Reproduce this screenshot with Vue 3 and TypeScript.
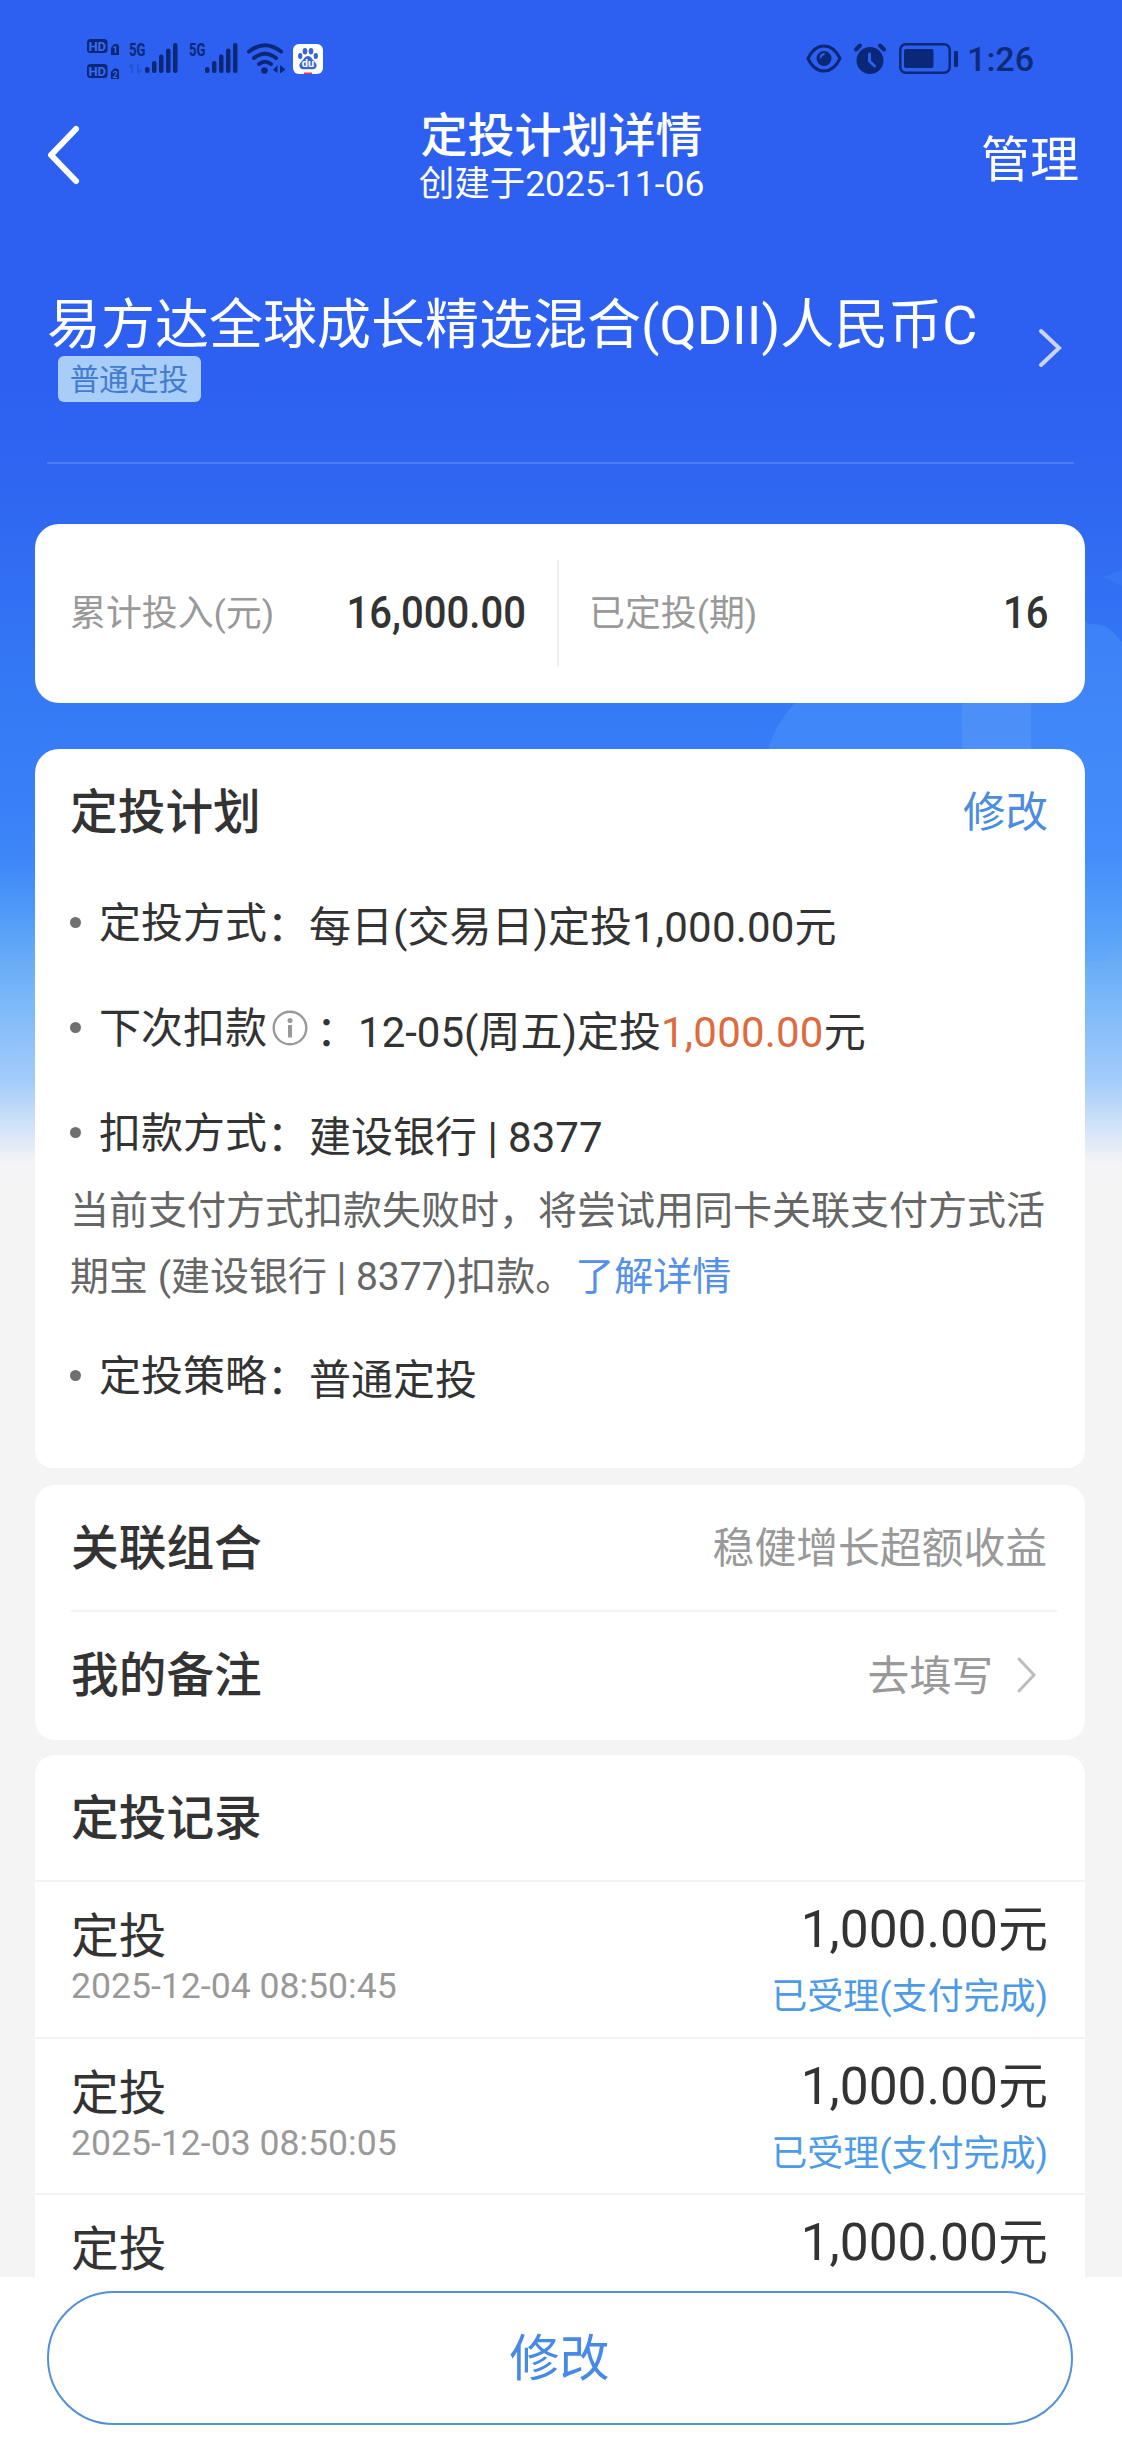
<script setup lang="ts">
interface RecordItem {
  time: string
  amount: string
  status: string
}

const records: RecordItem[] = [
  { time: '2025-12-04 08:50:45', amount: '1,000.00', status: '已受理(支付完成)' },
  { time: '2025-12-03 08:50:05', amount: '1,000.00', status: '已受理(支付完成)' },
  { time: '', amount: '1,000.00', status: '' },
]

const bars = [
  { x: 0, y: 24, h: 6 },
  { x: 7, y: 18, h: 12 },
  { x: 14, y: 11.5, h: 18.5 },
  { x: 21, y: 5.5, h: 24.5 },
  { x: 28, y: 0, h: 30 },
]
</script>

<template>
  <div class="page">
    <svg class="decor" width="400" height="400" viewBox="0 0 400 400">
      <path d="M46 169Q54 143 73 123Q120 60 200 45L363 40L366 44Q384 43 392 53L400 62V342Q396 362 383 380L363 382H46Z" fill="#5aa2ff" fill-opacity=".3" />
      <path d="M245 60H309V169H240V123Z" fill="#fff" fill-opacity=".07" />
      <path d="M381 -3L400 -10V6Z" fill="#5aa2ff" fill-opacity=".15" />
    </svg>

    <div class="statusbar">
      <svg class="hd" width="32" height="42" viewBox="0 0 32 42">
        <rect x="0" y="1" width="20.5" height="14" rx="3.5" />
        <text x="10.2" y="12.6" class="cut">HD</text>
        <path d="M24 10l3-4h2q3 0 3 3v8h-8z" />
        <text x="28" y="15.4" class="num">1</text>
        <rect x="0" y="26" width="20.5" height="14" rx="3.5" />
        <text x="10.2" y="37.6" class="cut">HD</text>
        <path d="M24 34l3-3.500h2q3 0 3 3v7.500h-8z" />
        <text x="28" y="39.800" class="num">2</text>
      </svg>
      <svg class="sig first" width="49" height="30" viewBox="0 0 49 30">
        <text x="0" y="13.300" textLength="16.500" lengthAdjust="spacingAndGlyphs" class="g5">5G</text>
        <path d="M3 21v9M0 24l3-3M9 21v9M12 27l-3 3" stroke="#0f2f86" stroke-width="2" fill="none" opacity=".25" />
        <rect v-for="b in bars" :key="b.x" :x="b.x + 16" :y="b.y" width="4.500" :height="b.h" rx="2" />
      </svg>
      <svg class="sig" width="49" height="30" viewBox="0 0 49 30">
        <text x="0" y="13.300" textLength="16.500" lengthAdjust="spacingAndGlyphs" class="g5">5G</text>
        <rect v-for="b in bars" :key="b.x" :x="b.x + 16" :y="b.y" width="4.500" :height="b.h" rx="2" />
      </svg>
      <svg class="wifi" width="39" height="31" viewBox="0 0 39 31">
        <g fill="none" stroke="#0b2878" stroke-width="4" stroke-linecap="round">
          <path d="M2 8.500Q18 -4 34 8.500" />
          <path d="M7 15Q18 6.500 29 15" />
          <path d="M12 21Q18 16.500 24 21" />
        </g>
        <circle cx="17.500" cy="27.500" r="3.300" />
        <path d="M26 27l4.500-5v8zM33 22l5.500 4.500-5.500 4z" />
      </svg>
      <svg class="baidu" width="30" height="30" viewBox="0 0 30 30">
        <rect width="30" height="30" rx="6" fill="#fff" />
        <g fill="#3b63d8">
          <ellipse cx="7.200" cy="12" rx="2.200" ry="3" />
          <ellipse cx="12" cy="7.200" rx="2.300" ry="3.200" />
          <ellipse cx="18" cy="7.200" rx="2.300" ry="3.200" />
          <ellipse cx="22.800" cy="12" rx="2.200" ry="3" />
          <path d="M15 12c3 0 4 3 6 5s3 3.500 2.500 5.500-2.500 2.800-4.500 2.800h-8c-2 0-4-.8-4.500-2.800S7 19 9 17s3-5 6-5z" />
        </g>
        <text x="15" y="23" class="du">du</text>
        <path d="M11 28.500h8v1.500h-8z" fill="#e0393e" />
      </svg>
      <div class="right">
        <svg class="eye" width="36" height="29" viewBox="0 0 36 29">
          <path d="M2 14.500C6 6 11 2 18 2s12 4 16 12.500C30 23 25 27 18 27S6 23 2 14.500z" fill="none" stroke="#0b2878" stroke-width="3" />
          <circle cx="18" cy="14.500" r="7.500" />
          <path d="M14.500 13.500q.5-3 3.500-3.500" fill="none" stroke="#2d60f0" stroke-width="1.800" stroke-linecap="round" />
        </svg>
        <svg class="alarm" width="32" height="31" viewBox="0 0 32 31">
          <circle cx="16" cy="17.500" r="13.500" />
          <path d="M2 6.500L6 2.500M30 6.500L26 2.500" stroke="#0b2878" stroke-width="4" stroke-linecap="round" />
          <path d="M15.500 11v7l5 5" fill="none" stroke="#2d60f0" stroke-width="3" stroke-linecap="round" />
        </svg>
        <svg class="battery" width="60" height="31" viewBox="0 0 60 31">
          <rect x="1.300" y="1.300" width="49.400" height="28.400" rx="5.500" fill="none" stroke="#0b2878" stroke-width="2.500" />
          <rect x="5" y="6" width="29.500" height="19" rx="2" />
          <rect x="55" y="8" width="4" height="16" rx="1" />
        </svg>
        <span class="clock">1:26</span>
      </div>
    </div>

    <header class="nav">
      <svg class="back" width="33" height="60" viewBox="0 0 33 60">
        <path d="M29 4L4 30l25 26" fill="none" stroke="#fff" stroke-width="6" stroke-linecap="round" stroke-linejoin="round" />
      </svg>
      <div class="titles">
        <h1>定投计划详情</h1>
        <p>创建于2025-11-06</p>
      </div>
      <span class="manage">管理</span>
    </header>

    <section class="fund">
      <div class="fund-main">
        <div class="fund-name">易方达全球成长精选混合(QDII)人民币C</div>
        <span class="tag">普通定投</span>
      </div>
      <svg class="arrow" width="24" height="40" viewBox="0 0 24 40">
        <path d="M3 3l18 17L3 37" fill="none" stroke="#cdd4ee" stroke-width="4" stroke-linecap="round" />
      </svg>
    </section>

    <section class="card summary">
      <div class="cell left">
        <span class="label">累计投入(元)</span>
        <span class="din">16,000.00</span>
      </div>
      <div class="cell">
        <span class="label">已定投(期)</span>
        <span class="din">16</span>
      </div>
    </section>

    <section class="card plan">
      <div class="plan-head">
        <h2>定投计划</h2>
        <a>修改</a>
      </div>
      <div class="row"><i></i><span>定投方式</span><span class="colon">：</span><b>每日(交易日)定投<em>1,000.00</em>元</b></div>
      <div class="row">
        <i></i><span>下次扣款</span>
        <svg class="info" width="36" height="36" viewBox="0 0 36 36">
          <circle cx="18" cy="18" r="16.300" fill="none" stroke="#999" stroke-width="2.400" />
          <circle cx="18" cy="10.500" r="2.500" fill="#999" />
          <rect x="16" y="15" width="4" height="12.500" fill="#999" />
        </svg>
        <span class="colon">：</span><b>12-05(周五)定投<em class="hot">1,000.00</em>元</b>
      </div>
      <div class="row"><i></i><span>扣款方式</span><span class="colon">：</span><b>建设银行 | 8377</b></div>
      <p class="note">当前支付方式扣款失败时，将尝试用同卡关联支付方式活<br>期宝 (建设银行 | 8377)扣款。<a>了解详情</a></p>
      <div class="row last"><i></i><span>定投策略</span><span class="colon">：</span><b>普通定投</b></div>
    </section>

    <section class="card links">
      <div class="link-row">
        <h2>关联组合</h2>
        <span>稳健增长超额收益</span>
      </div>
      <div class="link-row second">
        <h2>我的备注</h2>
        <span>去填写</span>
        <svg width="21" height="36" viewBox="0 0 21 36">
          <path d="M3 2l15 16L3 34" fill="none" stroke="#bdbdbd" stroke-width="3" stroke-linecap="round" />
        </svg>
      </div>
    </section>

    <section class="card records">
      <div class="rec-head"><h2>定投记录</h2></div>
      <div v-for="(r, i) in records" :key="i" class="rec">
        <div>
          <div class="rec-name">定投</div>
          <div class="rec-time">{{ r.time }}</div>
        </div>
        <div class="rec-right">
          <div class="rec-amount">{{ r.amount }}<small>元</small></div>
          <div class="rec-status">{{ r.status }}</div>
        </div>
      </div>
    </section>

    <footer class="footer">
      <button type="button"><span>修改</span></button>
    </footer>
  </div>
</template>

<style>
body {
  background: #f4f4f5;
}
</style>

<style scoped>
* {
  box-sizing: border-box;
}
.page {
  position: relative;
  display: flex;
  flex-direction: column;
  width: 1122px;
  height: 2442px;
  overflow: hidden;
  font-family: Roboto, "Noto Sans CJK SC", sans-serif;
  color: #333;
  background: linear-gradient(180deg, #2d60f0 0, #2d60f0 380px, #2f67f1 500px, #357af5 700px, #397ff8 800px, #3d87f8 860px, #4a96f8 900px, #62a8f7 950px, #7db9f8 1005px, #a2cbfa 1080px, #cbe0f9 1120px, #f4f3f5 1163px, #f4f4f5 1200px);
}
.decor {
  position: absolute;
  left: 722px;
  top: 580px;
}
svg {
  overflow: visible;
}
.page > *:not(.decor) {
  position: relative;
}
h1,
h2,
p {
  margin: 0;
  font-weight: 500;
}
.statusbar {
  display: flex;
  align-items: flex-start;
  height: 104px;
  padding: 43px 88px 0 87px;
  fill: #0b2878;
  flex: none;
}
.hd {
  margin-top: -5px;
}
.cut,
.num,
.du {
  font: 700 13px Roboto, sans-serif;
  text-anchor: middle;
  fill: #3c6cf0;
}
.num {
  font-size: 9px;
}
.du {
  font-size: 11px;
  fill: #fff;
}
.g5 {
  font: 700 17.5px Roboto, sans-serif;
}
.sig {
  margin-left: 11px;
}
.sig.first {
  margin-left: 10px;
}
.wifi {
  margin-left: 9px;
}
.baidu {
  margin: 1px 0 0 7px;
}
.right {
  display: flex;
  margin-left: auto;
}
.eye {
  margin-top: 1px;
}
.alarm {
  margin-left: 12px;
}
.battery {
  margin-left: 13px;
}
.clock {
  margin-left: 8px;
  margin-top: -4px;
  font-size: 34px;
  font-weight: 500;
  line-height: 40px;
  color: #0f2a78;
}
.nav {
  display: flex;
  justify-content: space-between;
  height: 156px;
  padding: 0 43px 0 47px;
  color: #fff;
  flex: none;
}
.back {
  margin-top: 21px;
}
.titles {
  text-align: center;
  margin-left: 62px;
}
.titles h1 {
  font-size: 47px;
  line-height: 60px;
  padding-top: 2px;
}
.titles p {
  font-size: 35.5px;
  line-height: 40px;
  margin-top: -2px;
  font-weight: 400;
}
.manage {
  font-size: 49px;
  line-height: 60px;
  margin-top: 27px;
}
.fund {
  display: flex;
  justify-content: space-between;
  height: 204px;
  margin: 0 48px 60px 47px;
  padding-top: 35px;
  border-bottom: 2px solid #4a7df3;
  flex: none;
}
.fund-name {
  font-size: 54px;
  line-height: 62px;
  color: #fff;
  white-space: nowrap;
}
.tag {
  display: block;
  width: 143px;
  height: 46px;
  margin: -1px 0 0 11px;
  padding-right: 1px;
  border-radius: 6px;
  background: #a9cdf9;
  color: #427bcf;
  font-size: 29.7px;
  line-height: 47px;
  text-align: center;
}
.arrow {
  margin: 33px 12px 0 0;
}
.card {
  background: #fff;
  margin: 0 37px 0 35px;
  border-radius: 20px;
  flex: none;
}
.summary {
  display: flex;
  height: 179px;
  border-radius: 24px;
  padding: 36px 0;
}
.cell {
  display: flex;
  flex: 1;
  align-items: center;
  justify-content: space-between;
  padding: 0 37px 0 30px;
}
.cell.left {
  flex: 0 0 524px;
  padding: 0 31px 0 35px;
  border-right: 2px solid #f0f0f0;
}
.label {
  font-size: 35.9px;
  color: #999;
  margin-top: -8px;
}
.din {
  font-size: 43.5px;
  font-weight: 500;
  transform: scaleX(0.92);
  transform-origin: right;
}
.plan {
  height: 719px;
  margin-top: 46px;
  border-radius: 24px 24px 18px 18px;
  padding: 26px 0 0 36px;
}
.plan-head {
  display: flex;
  justify-content: space-between;
  align-items: center;
  height: 76px;
  padding-right: 37px;
  margin-bottom: 20px;
}
h2 {
  font-size: 47.7px;
  line-height: 60px;
}
.plan h2 {
  margin-left: -1px;
}
.plan-head a {
  font-size: 42.5px;
  line-height: 60px;
  margin-top: -1px;
  color: #4a8ce0;
}
.row {
  display: flex;
  align-items: center;
  height: 105px;
  font-size: 42px;
  line-height: 60px;
  white-space: nowrap;
}
.row i {
  width: 11px;
  height: 11px;
  border-radius: 50%;
  background: #707070;
  margin: -3px 18px 0 -1px;
}
.row b {
  font-weight: 400;
  margin-top: 8px;
}
.row em {
  font-style: normal;
  letter-spacing: 0.2px;
}
.row .colon {
  margin-top: 7px;
}
.hot {
  color: #dc6b41;
}
.info {
  margin: -2px 8px 0 5px;
}
.note {
  margin: -8px 0 0 -1px;
  font-size: 39px;
  line-height: 66px;
  font-weight: 400;
  color: #666;
  white-space: nowrap;
}
.note a {
  margin-left: 1px;
  color: #548fe8;
}
.last {
  margin-top: 14px;
}
.links {
  height: 255px;
  margin-top: 17px;
  padding: 0 0 0 36px;
}
.link-row {
  display: flex;
  align-items: center;
  height: 127px;
  margin-right: 28px;
  padding-right: 10px;
  border-bottom: 2px solid #f3f3f3;
}
.link-row h2 {
  margin-top: 2px;
}
.link-row.second {
  height: 128px;
  border: 0;
  padding-right: 20px;
}
.link-row.second h2 {
  margin-top: 0;
}
.link-row span {
  margin-left: auto;
  margin-top: -6px;
  font-size: 41.8px;
  color: #999;
}
.link-row svg {
  margin: -3px 0 0 23px;
}
.records {
  height: 600px;
  margin-top: 15px;
}
.rec-head {
  height: 125px;
  padding: 34px 0 0 36px;
}
.rec {
  display: flex;
  justify-content: space-between;
  height: 156.5px;
  padding: 0 37px 0 36px;
  border-top: 2px solid #f3f3f3;
}
.rec-name {
  margin-top: 27px;
  font-size: 47.7px;
  line-height: 57px;
}
.rec-time {
  font-size: 35.6px;
  line-height: 40px;
  color: #999;
}
.rec-right {
  text-align: right;
}
.rec-amount {
  margin-top: 18px;
  font-size: 51.5px;
  line-height: 60px;
}
.rec-amount small {
  font-size: 50px;
  line-height: 1;
}
.rec-status {
  margin-top: 12px;
  font-size: 36px;
  line-height: 50px;
  color: #4c9be9;
}
.footer {
  position: absolute !important;
  left: 0;
  right: 0;
  bottom: 0;
  height: 165px;
  padding: 14px 49px 0 47px;
  background: #fff;
}
.footer button {
  display: block;
  width: 100%;
  height: 134px;
  padding: 0 1px 9px 0;
  border: 2px solid #5390d6;
  border-radius: 67px;
  background: #fff;
  color: #4789e6;
  font-family: inherit;
  font-size: 50px;
}
</style>
